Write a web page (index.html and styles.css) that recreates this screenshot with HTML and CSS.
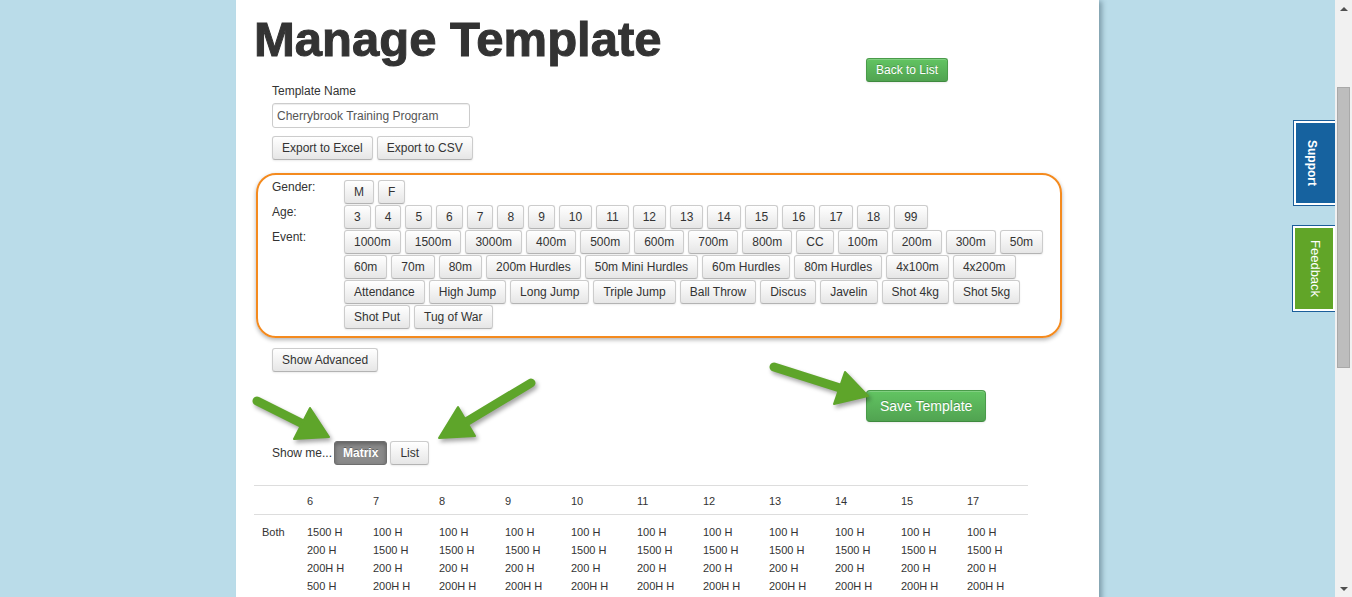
FILE: index.html
```html
<!DOCTYPE html>
<html lang="en">
<head>
<meta charset="utf-8">
<title>Manage Template</title>
<link rel="stylesheet" href="styles.css">
</head>
<body>
<div class="main">
  <div class="page">
    <h1 class="title">Manage Template</h1>
    <div class="top-actions"><button class="btn btn-success">Back to List</button></div>
    <div class="form">
      <label class="field-label">Template Name</label>
      <input class="text-input" type="text" value="Cherrybrook Training Program">
      <div class="btn-row export-row"><button class="btn">Export to Excel</button><button class="btn">Export to CSV</button></div>
    </div>
    <div class="filters">
      <div class="filter-label">Gender:</div>
      <div class="filter-options">
        <div class="opt-row"><button class="btn">M</button><button class="btn">F</button></div>
      </div>
      <div class="filter-label">Age:</div>
      <div class="filter-options">
        <div class="opt-row"><button class="btn">3</button><button class="btn">4</button><button class="btn">5</button><button class="btn">6</button><button class="btn">7</button><button class="btn">8</button><button class="btn">9</button><button class="btn">10</button><button class="btn">11</button><button class="btn">12</button><button class="btn">13</button><button class="btn">14</button><button class="btn">15</button><button class="btn">16</button><button class="btn">17</button><button class="btn">18</button><button class="btn">99</button></div>
      </div>
      <div class="filter-label">Event:</div>
      <div class="filter-options">
        <div class="opt-row"><button class="btn">1000m</button><button class="btn">1500m</button><button class="btn">3000m</button><button class="btn">400m</button><button class="btn">500m</button><button class="btn">600m</button><button class="btn">700m</button><button class="btn">800m</button><button class="btn">CC</button><button class="btn">100m</button><button class="btn">200m</button><button class="btn">300m</button><button class="btn">50m</button></div>
        <div class="opt-row"><button class="btn">60m</button><button class="btn">70m</button><button class="btn">80m</button><button class="btn">200m Hurdles</button><button class="btn">50m Mini Hurdles</button><button class="btn">60m Hurdles</button><button class="btn">80m Hurdles</button><button class="btn">4x100m</button><button class="btn">4x200m</button></div>
        <div class="opt-row"><button class="btn">Attendance</button><button class="btn">High Jump</button><button class="btn">Long Jump</button><button class="btn">Triple Jump</button><button class="btn">Ball Throw</button><button class="btn">Discus</button><button class="btn">Javelin</button><button class="btn">Shot 4kg</button><button class="btn">Shot 5kg</button></div>
        <div class="opt-row"><button class="btn">Shot Put</button><button class="btn">Tug of War</button></div>
      </div>
    </div>
    <div class="form adv-row"><button class="btn">Show Advanced</button></div>
    <div class="save-row"><button class="btn btn-success btn-large">Save Template</button></div>
    <div class="form view-row"><span class="view-label">Show me...</span><button class="btn btn-active">Matrix</button><button class="btn">List</button></div>
    <table class="matrix">
      <colgroup>
        <col class="c-first"><col class="c-age"><col class="c-age"><col class="c-age"><col class="c-age"><col class="c-age"><col class="c-age"><col class="c-age"><col class="c-age"><col class="c-age"><col class="c-age"><col class="c-last">
      </colgroup>
      <thead>
        <tr><th></th><th>6</th><th>7</th><th>8</th><th>9</th><th>10</th><th>11</th><th>12</th><th>13</th><th>14</th><th>15</th><th>17</th></tr>
      </thead>
      <tbody>
        <tr>
          <td>Both</td>
          <td>1500 H<br>200 H<br>200H H<br>500 H<br>60 H<br>70 H<br>80 H</td>
          <td>100 H<br>1500 H<br>200 H<br>200H H<br>300 H<br>400 H<br>50 H</td>
          <td>100 H<br>1500 H<br>200 H<br>200H H<br>300 H<br>400 H<br>50 H</td>
          <td>100 H<br>1500 H<br>200 H<br>200H H<br>300 H<br>400 H<br>50 H</td>
          <td>100 H<br>1500 H<br>200 H<br>200H H<br>300 H<br>400 H<br>50 H</td>
          <td>100 H<br>1500 H<br>200 H<br>200H H<br>300 H<br>400 H<br>50 H</td>
          <td>100 H<br>1500 H<br>200 H<br>200H H<br>300 H<br>400 H<br>50 H</td>
          <td>100 H<br>1500 H<br>200 H<br>200H H<br>300 H<br>400 H<br>50 H</td>
          <td>100 H<br>1500 H<br>200 H<br>200H H<br>300 H<br>400 H<br>50 H</td>
          <td>100 H<br>1500 H<br>200 H<br>200H H<br>300 H<br>400 H<br>50 H</td>
          <td>100 H<br>1500 H<br>200 H<br>200H H<br>300 H<br>400 H<br>50 H</td>
        </tr>
      </tbody>
    </table>
  </div>

  <div class="tab tab-support"><div class="tab-inner">Support</div></div>
  <div class="tab tab-feedback"><div class="tab-inner">Feedback</div></div>

  <svg class="arrows" width="1335" height="597" viewBox="0 0 1335 597" aria-hidden="true">
    <g class="arrow">
      <line x1="257" y1="401" x2="303" y2="424"/>
      <polygon points="329,437 294,439 310,408"/>
    </g>
    <g class="arrow">
      <line x1="531" y1="383" x2="466" y2="422"/>
      <polygon points="439,438 475,436 458,407"/>
    </g>
    <g class="arrow">
      <line x1="774" y1="367" x2="840" y2="388"/>
      <polygon points="868,396 834,404 845,372"/>
    </g>
  </svg>
</div>
<div class="scrollbar">
  <div class="sb-btn"><span class="sb-up"></span></div>
  <div class="sb-track"><div class="sb-thumb"></div></div>
  <div class="sb-btn"><span class="sb-down"></span></div>
</div>
</body>
</html>
```
FILE: styles.css
```css
* { box-sizing: border-box; }

html, body {
  margin: 0;
  padding: 0;
  height: 597px;
  overflow: hidden;
}

body {
  display: flex;
  font-family: "Liberation Sans", Arial, sans-serif;
  font-size: 12px;
  color: #333;
}

.main {
  position: relative;
  flex: 1;
  height: 597px;
  overflow: hidden;
  background: #badce9;
}

.page {
  width: 863px;
  min-height: 597px;
  margin: 0 auto;
  background: #fff;
  padding: 13px 17px 0 18px;
  box-shadow: 4px 0 5px -1px rgba(50, 80, 95, 0.45);
}

.title {
  margin: 0;
  font-size: 49px;
  line-height: 53px;
  font-weight: bold;
  color: #333;
  letter-spacing: 0;
  -webkit-text-stroke: 1px #333;
}

.top-actions {
  margin-top: -8px;
  padding-left: 612px;
  height: 24px;
}

.form {
  padding-left: 18px;
}

.field-label {
  display: block;
  line-height: 16px;
  font-size: 12px;
  padding-top: 1px;
}

.text-input {
  display: block;
  margin-top: 4px;
  width: 198px;
  height: 25px;
  padding: 2px 4px;
  border: 1px solid #ccc;
  border-radius: 3px;
  box-shadow: inset 0 1px 1px rgba(0, 0, 0, 0.075);
  font-family: "Liberation Sans", Arial, sans-serif;
  font-size: 12px;
  color: #555;
}

.btn-row {
  display: flex;
  gap: 4px;
}

.export-row {
  margin-top: 8px;
}

.btn {
  display: inline-block;
  margin: 0;
  height: 24px;
  padding: 0 9px;
  font-family: "Liberation Sans", Arial, sans-serif;
  font-size: 12px;
  line-height: 22px;
  color: #333;
  white-space: nowrap;
  background: linear-gradient(#ffffff, #e6e6e6);
  border: 1px solid #cccccc;
  border-bottom-color: #b3b3b3;
  border-radius: 3px;
  box-shadow: inset 0 1px 0 rgba(255, 255, 255, 0.2), 0 1px 2px rgba(0, 0, 0, 0.08);
}

.btn-success {
  color: #fff;
  background: linear-gradient(#62c462, #51a351);
  border-color: #4a9b4a #4a9b4a #3f8a3f;
  text-shadow: 0 -1px 0 rgba(0, 0, 0, 0.2);
}

.btn-large {
  height: 32px;
  padding: 0 13px;
  font-size: 14px;
  line-height: 30px;
  border-radius: 4px;
}

.btn-active {
  color: #fff;
  font-weight: bold;
  padding: 0 8px;
  background: #8a8a8a;
  border-color: #6e6e6e;
  box-shadow: inset 0 2px 4px rgba(0, 0, 0, 0.3);
  text-shadow: 0 -1px 0 rgba(0, 0, 0, 0.3);
}

.filters {
  margin: 13px 0 0 2px;
  width: 806px;
  display: grid;
  grid-template-columns: 72px 1fr;
  row-gap: 1px;
  padding: 5px 13px 7px 14px;
  border: 2px solid #f48a1e;
  border-radius: 20px;
  box-shadow: 0 2px 4px rgba(0, 0, 0, 0.3);
}

.filter-label {
  line-height: 16px;
  margin-top: -1px;
}

.filter-options {
  display: flex;
  flex-direction: column;
  gap: 1px;
}

.opt-row {
  display: flex;
  gap: 4px;
}

.adv-row {
  margin-top: 10px;
}

.save-row {
  margin-top: 18px;
  padding-left: 612px;
  height: 32px;
}

.view-row {
  margin-top: 19px;
  display: flex;
  align-items: center;
}

.view-label {
  margin-right: 2px;
}

.view-row .btn + .btn {
  margin-left: 3px;
}

.matrix {
  margin: 20px 0 0 0;
  width: 774px;
  table-layout: fixed;
  border-collapse: collapse;
  font-size: 11px;
  color: #333;
}

.c-first { width: 45px; }
.c-age { width: 66px; }
.c-last { width: 69px; }

.matrix th {
  text-align: left;
  font-weight: normal;
  padding: 8px 8px 6px 8px;
  line-height: 14px;
  border-top: 1px solid #dddddd;
  border-bottom: 1px solid #dddddd;
}

.matrix td {
  text-align: left;
  vertical-align: top;
  padding: 8px 8px 8px 8px;
  line-height: 18px;
  white-space: nowrap;
}

/* side tabs */
.tab {
  position: absolute;
  right: 0;
  display: flex;
  background: #fff;
  border: 1px solid #1b5e9a;
  border-right: none;
  padding: 2px 0 2px 2px;
}

.tab-inner {
  flex: 1;
  width: 100%;
  height: 100%;
  writing-mode: vertical-rl;
  display: flex;
  align-items: center;
  justify-content: center;
  color: #fff;
}

.tab-support {
  top: 120px;
  width: 42px;
  height: 86px;
}

.tab-support .tab-inner {
  background: #16629f;
  font-weight: bold;
  font-size: 12px;
  padding-right: 7px;
}

.tab-feedback {
  top: 225px;
  width: 43px;
  height: 87px;
  padding-right: 2px;
}

.tab-feedback .tab-inner {
  background: #61a528;
  font-size: 13px;
  padding-left: 3px;
}

/* annotation arrows */
.arrows {
  position: absolute;
  left: 0;
  top: 0;
  pointer-events: none;
  filter: drop-shadow(2px 3px 2px rgba(0, 0, 0, 0.35));
}

.arrow line {
  stroke: #5ea52a;
  stroke-width: 9;
  stroke-linecap: round;
}

.arrow polygon {
  fill: #5ea52a;
  stroke: #5ea52a;
  stroke-width: 2;
  stroke-linejoin: round;
}

/* scrollbar */
.scrollbar {
  width: 17px;
  height: 597px;
  background: #f1f1f1;
  display: flex;
  flex-direction: column;
}

.sb-btn {
  height: 17px;
  display: flex;
  align-items: center;
  justify-content: center;
}

.sb-up {
  width: 0;
  height: 0;
  border-left: 4px solid transparent;
  border-right: 4px solid transparent;
  border-bottom: 4px solid #505050;
}

.sb-down {
  width: 0;
  height: 0;
  border-left: 4px solid transparent;
  border-right: 4px solid transparent;
  border-top: 4px solid #505050;
}

.sb-track {
  flex: 1;
  padding: 0 2px;
}

.sb-thumb {
  margin-top: 70px;
  height: 281px;
  background: #bdbdbd;
  border: 1px solid #a9a9a9;
}
```
